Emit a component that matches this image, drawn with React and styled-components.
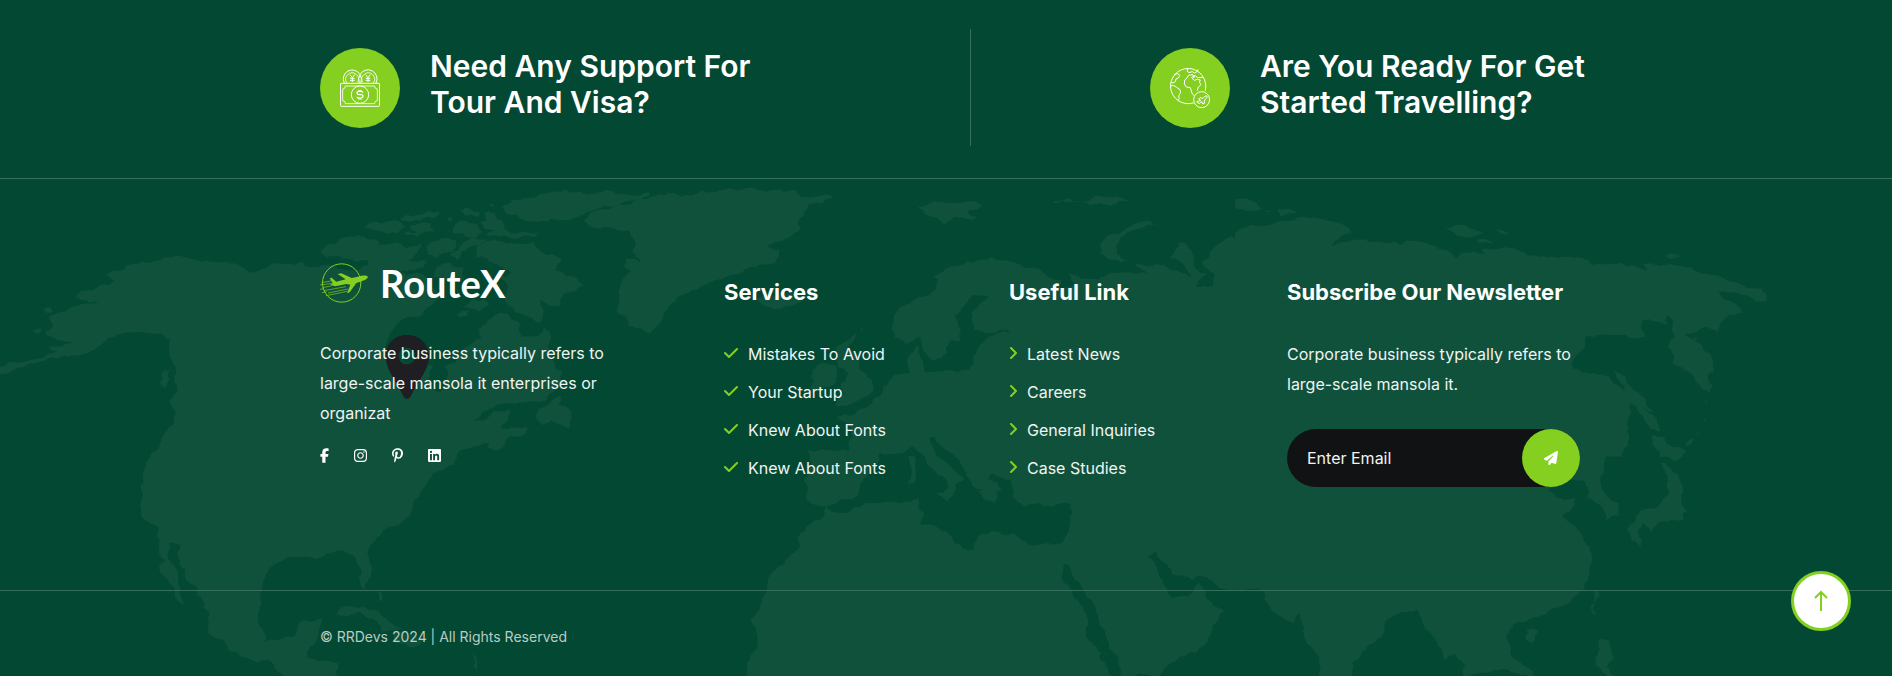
import React from "react";
import styled, { createGlobalStyle } from "styled-components";
import { FaFacebookF, FaInstagram, FaPinterestP, FaLinkedin, FaPaperPlane } from "react-icons/fa6";

const color = {
  ground: "#034833",
  land: "#10513c",
  line: "#35705f",
  lime: "#84cf20",
  white: "#ffffff",
  soft: "#f0f4f2",
  ink: "#111214",
  pin: "#1f1e22",
};

const GlobalStyle = createGlobalStyle`
  *, *::before, *::after { box-sizing: border-box; }
  body {
    margin: 0;
    background: ${color.ground};
    color: ${color.white};
    font-family: Inter, "Liberation Sans", sans-serif;
    font-size: 16px;
    line-height: 30px;
  }
  h2, h3, p, ul { margin: 0; padding: 0; }
  ul { list-style: none; }
  a { color: inherit; text-decoration: none; }
`;

/* ---------- world map backdrop ---------- */

// Breaks each straight edge into small irregular steps so outlines read as coastline.
function coast(points, seed = 7) {
  let s = seed;
  const rand = () => {
    s = (s * 16807) % 2147483647;
    return s / 2147483647 - 0.5;
  };
  let pts = points.trim().split(/\s+/).map((p) => p.split(",").map(Number));
  for (let pass = 0; pass < 4; pass += 1) {
    const next = [];
    pts.forEach((a, i) => {
      const b = pts[(i + 1) % pts.length];
      const dx = b[0] - a[0];
      const dy = b[1] - a[1];
      const len = Math.hypot(dx, dy);
      next.push(a);
      if (len > 7 && len < 240) {
        const k = rand() * 0.32;
        next.push([a[0] + dx / 2 - dy * k, a[1] + dy / 2 + dx * k]);
      }
    });
    pts = next;
  }
  return pts.map((p) => p.map((n) => Math.round(n * 10) / 10).join(",")).join(" ");
}

const america = [
  "-8,598 60,575 110,560 140,545 120,530 180,515 140,510 110,492 130,468 118,442 160,425 215,400 250,395 185,382 200,362 265,345 280,330 260,315 300,300 350,275 400,265 440,258 480,270 530,275 590,290 610,305 650,295 720,285 740,275 750,290 790,285 830,297 860,300 900,285 930,300 980,305 1020,330 1060,350 1080,380 1060,405 1000,440 965,475 950,510 950,560 1000,582 1060,585 1055,640 1075,668 1095,620 1090,590 1140,530 1180,505 1172,478 1195,450 1240,430 1270,455 1280,500 1315,500 1335,470 1345,540 1360,590 1380,605 1370,650 1340,690 1250,700 1200,715 1150,762 1215,722 1250,718 1240,755 1225,775 1290,770 1288,790 1250,800 1210,842 1192,832 1215,805 1130,840 1110,885 1060,910 1035,960 1012,995 1005,1035 940,1080 905,1130 908,1220 895,1262 880,1230 868,1160 820,1145 780,1165 710,1160 675,1180 655,1210 640,1290 630,1340 650,1415 720,1400 745,1350 790,1345 780,1400 755,1465 780,1475 830,1480 830,1525 700,1525 660,1470 630,1478 560,1440 510,1385 513,1330 480,1250 440,1180 440,1125 415,1118 420,1180 442,1260 458,1312 430,1285 415,1240 390,1195 405,1170 390,1120 388,1075 355,1050 345,960 350,910 370,850 410,780 430,730 415,690 435,650 430,590 415,560 418,510 395,490 345,485 300,490 255,515 230,540 180,555 100,575 -8,610",
  "1310,745 1345,700 1375,672 1370,705 1400,725 1395,775 1350,750 1330,765",
  "395,610 415,600 405,655 392,640",
  "78,485 100,475 98,490", "105,418 125,412 130,425 112,428",
  "825,1335 850,1308 890,1310 950,1350 990,1375 935,1385 925,1355 880,1325",
  "965,1395 1010,1390 1040,1410 1010,1432 970,1420",
  "925,1262 938,1275 936,1295 928,1282", "1158,1450 1168,1478 1168,1512 1160,1490",
  "1230,110 1290,85 1420,65 1490,60 1590,66 1590,78 1540,92 1480,108 1450,122 1420,142 1290,152 1240,130",
];

const arctic = [
  "210,215 260,190 272,173 310,172 340,170 380,180 392,195 450,190 470,205 515,190 500,220 475,245 530,240 520,262 470,275 400,285 360,270 350,240 300,238 270,228 230,235",
  "345,142 400,128 435,120 470,140 410,160 375,150", "450,120 500,105 570,97 555,112 510,122",
  "450,165 500,158 480,138 540,130 555,155 500,170", "630,92 660,85 690,100 680,112 645,105",
  "700,100 735,98 738,118 708,120", "615,135 680,130 695,160 660,172 610,160",
  "690,125 760,128 765,142 700,142", "720,155 790,160 870,155 860,168 800,175 710,168",
  "530,200 620,180 610,215 560,235 535,225", "640,185 710,180 660,200 620,240 600,225",
  "560,262 600,248 640,262 640,300 590,300 550,290", "470,285 530,290 540,330 500,345 460,320",
  "680,200 740,182 800,190 850,185 890,225 935,240 915,270 950,290 1000,315 940,342 930,380 900,378 870,360 880,390 868,428 840,410 800,400 760,350 775,320 750,290 785,280 740,250 675,235",
  "640,380 700,358 720,372 690,395 660,385", "620,405 655,390 650,408 630,412",
  "590,120 602,110 605,125", "715,75 728,72 732,82",
];

const southEast = [
  "-40,150 0,120 60,105 140,75 200,80 250,60 380,55 480,62 490,80 575,82 510,105 500,130 485,160 490,180 440,215 410,225 440,240 430,280 385,275 418,285 320,315 260,345 190,380 155,430 125,490 95,475 70,470 45,360 75,305 58,290 65,265 100,280 80,240 72,180 0,175 -30,165",
  "385,385 420,380 470,370 500,380 475,405 430,418 400,405",
  "780,110 860,100 940,105 900,125 925,145 870,140 845,165 800,135",
  "1105,100 1190,95 1230,80 1295,92 1250,108 1200,106",
  "1225,250 1240,200 1290,175 1350,155 1370,168 1290,190 1265,225 1270,255 1300,272 1250,268",
  "575,545 600,515 625,490 610,525 630,555 635,575 660,625 670,660 640,685 575,708 600,670 590,640 610,610 582,590",
  "520,600 550,580 578,585 565,650 515,670 525,635", "640,480 645,468 642,490",
  "755,860 770,860 772,940 755,945", "815,970 850,975 852,998",
  "920,962 975,962 965,1000 945,990",
  "720,440 760,400 830,330 810,320 850,295 900,275 960,262 1010,275 1080,300 1130,330 1128,360 1165,345 1150,310 1180,325 1220,330 1260,308 1340,312 1310,280 1420,305 1450,320 1395,265 1420,215 1450,245 1455,290 1485,310 1460,350 1500,350 1505,310 1475,280 1500,240 1580,190 1580,1262 1530,1258 1470,1215 1450,1230 1405,1215 1385,1180 1362,1145 1340,1160 1370,1220 1385,1250 1400,1285 1440,1280 1465,1240 1490,1290 1528,1320 1500,1370 1490,1410 1420,1460 1370,1525 1280,1525 1270,1460 1220,1340 1180,1250 1140,1180 1135,1200 1110,1155 1160,1280 1190,1330 1190,1400 1225,1470 1258,1525 360,1525 380,1440 368,1350 400,1280 430,1200 485,1140 490,1090 540,1050 552,1012 560,1018 600,1030 650,1000 700,995 780,985 795,1030 780,1060 850,1085 870,1120 915,1140 930,1095 960,1082 1050,1125 1130,1120 1140,1100 1150,1000 1110,1010 1070,1000 1040,1010 1010,980 1005,930 960,910 950,925 985,960 960,970 930,958 900,920 870,860 820,800 808,805 820,840 860,890 892,930 870,945 850,990 835,975 852,955 845,925 800,880 765,828 740,850 685,850 680,880 630,980 560,1008 545,1010 505,988 500,930 515,860 505,840 550,840 610,842 620,800 605,760 580,740 620,735 660,705 710,630 760,610 755,560 780,525 792,575 800,608 850,600 905,600 915,560 935,520 1010,485 950,490 915,480 910,430 950,378 910,378 868,435 885,480 885,510 860,510 850,550 820,572 800,555 780,500 750,522 722,505 715,470",
];

const farEast = [
  "-12,190 70,165 140,143 240,160 268,190 220,228 280,208 330,215 390,225 400,212 460,225 520,265 530,250 590,252 580,235 650,235 740,262 810,262 850,285 940,290 935,280 980,300 970,282 1020,285 1100,305 1180,335 1255,355 1265,395 1210,375 1150,365 1165,390 1210,430 1175,435 1150,485 1120,470 1070,490 1105,520 1130,550 1140,600 1125,620 1132,670 1110,655 1040,575 1028,530 1045,500 1040,460 1025,430 1030,470 1000,455 970,450 965,475 975,500 900,495 830,500 815,550 800,595 850,610 890,620 910,650 940,735 930,830 920,860 880,860 875,900 865,930 910,1000 912,1035 875,1055 870,1010 835,980 830,935 800,928 770,935 740,960 760,985 805,985 775,1040 820,1090 845,1150 840,1210 815,1270 770,1310 700,1345 660,1360 640,1400 650,1430 700,1500 705,1525 540,1525 520,1450 490,1470 460,1390 425,1320 360,1345 340,1400 300,1440 270,1480 270,1525 190,1525 160,1420 145,1330 130,1360 100,1340 60,1290 55,1262 -12,1260",
  "895,600 940,650 1000,730 970,715 1010,785 985,775 955,710 910,630",
  "990,795 1040,830 1072,840 1050,875 1010,860",
  "1010,875 1035,895 1060,940 1062,990 1075,1020 1065,1050 1010,1055 990,1090 970,1060 965,1130 930,1080 960,1025 1005,1010 1030,975 1030,930",
  "850,1260 865,1270 855,1335 842,1310", "690,1380 718,1380 705,1418 685,1405",
  "862,1410 890,1415 895,1450 880,1490 910,1525 870,1505 855,1460",
  "495,175 545,170 585,190 520,195", "595,183 650,188 640,194", "570,210 600,212 610,222 575,220",
  "1022,260 1040,250 1062,262 1035,268", "-12,88 40,98 78,128 20,122 -12,115", "90,118 140,130 95,140",
  "1120,690 1124,700 1120,715", "1116,740 1120,750 1116,755", "1100,790 1104,780 1102,795", "1070,830 1090,805 1082,825",
  "1090,500 1098,505 1094,515",
];

const MapSvg = styled.svg`
  position: absolute;
  inset: 0;
  width: 100%;
  height: 100%;
  z-index: -1;
`;

function Land({ shapes, transform }) {
  return (
    <g transform={transform} fill={color.land}>
      {shapes.map((shape, i) => (
        <polygon key={shape} points={coast(shape, 11 + i * 37)} />
      ))}
    </g>
  );
}

function WorldMap() {
  return (
    <MapSvg viewBox="0 0 1892 676" preserveAspectRatio="xMidYMin slice" aria-hidden="true">
      <Land shapes={america} transform="translate(0 170) scale(0.40816 0.33333)" />
      <Land shapes={arctic} transform="translate(250 180) scale(0.33333)" />
      <Land shapes={southEast} transform="translate(600 170) scale(0.40816 0.33333)" />
      <Land shapes={farEast} transform="translate(1240 170) scale(0.41582 0.33333)" />
      <path
        transform="translate(250 180) scale(0.33333)"
        fill={color.pin}
        fillRule="evenodd"
        d="M471 465C434 465 407 492 407 527C407 572 440 604 461 650Q471 664 481 650C503 604 537 572 537 527C537 492 508 465 471 465ZM471 503A25 25 0 1 1 471 553A25 25 0 1 1 471 503Z"
      />
    </MapSvg>
  );
}

/* ---------- icons ---------- */

function MoneyIcon() {
  return (
    <svg width="40" height="40" viewBox="120 145 120 120" fill="none" stroke="#fff" strokeWidth="3" strokeLinejoin="round" aria-hidden="true">
      <path d="M133 190A26 26 0 1 1 180 165A26 26 0 1 1 228 190" />
      <path d="M180 165Q188 178 182 190M180 165Q173 178 178 190" />
      <path d="M141 190A19 19 0 1 1 173 188M188 188A19 19 0 1 1 220 190" strokeWidth="2.5" />
      <path d="M150 165L157 174L164 165M157 174V187M150 176H164M150 182H164M197 165L204 174L211 165M204 174V187M197 176H211M197 182H211" strokeWidth="3" />
      <rect x="121.500" y="191" width="117" height="69" rx="2" />
      <path d="M136 199H224Q224 208 232 208V243Q224 243 224 252H136Q136 243 128 243V208Q136 208 136 199Z" strokeWidth="2.500" />
      <circle cx="180" cy="225" r="26" fill={color.lime} />
      <path d="M189 219Q188 215 182 215H178Q171 215 171 220T178 225H182Q189 225 189 230T182 235H178Q171 235 171 231M177 210V215M183 210V215M177 235V240M183 235V240" strokeWidth="3.500" />
    </svg>
  );
}

function GlobeIcon() {
  return (
    <svg width="40" height="40" viewBox="123 144 120 120" fill="none" stroke="#fff" strokeWidth="3" strokeLinejoin="round" strokeLinecap="round" aria-hidden="true">
      <path d="M193 249A53 53 0 1 1 229 211" />
      <path d="M138 163L148 161L152 167L148 174L141 177L139 185L132 189L127 187" />
      <path d="M125 197Q136 194 143 202L153 209Q157 217 152 223L149 228L151 236L147 241" />
      <path d="M177 145L174 153L180 158L190 155L196 159L204 155L207 149" />
      <path d="M190 164L178 166L174 174L167 180L166 192L172 201L184 203L187 213L190 222L196 227M190 164L197 170L190 176L196 181L205 178L214 180L211 186L216 194L208 201L205 211" />
      <path d="M188 172L198 167L206 173L221 172" />
      <circle cx="218" cy="239" r="24" fill={color.lime} />
      <path d="M204 245L215 241L209 237L213 233L222 235L229 228Q236 226 234 232L227 240L226 250L221 252L219 245L211 250Z" />
    </svg>
  );
}

function PlaneMark() {
  return (
    <svg width="48" height="40" viewBox="60 68 144 120" fill="none" stroke={color.lime} aria-hidden="true">
      <circle cx="125" cy="128" r="57.500" strokeWidth="3" />
      <path
        fill={color.lime}
        stroke="none"
        d="M204 110C200 104 186 105 174 109L155 113L124 99L113 101L137 117L109 124L95 112L89 114L98 129L91 134L106 138L139 131L151 133L141 159L149 156L169 128C187 123 201 118 204 110Z"
      />
      <path strokeWidth="2" d="M64 127L93 122M60 134L96 129M68 142L95 136M60 147L72 145M72 151L138 139M66 157L80 155M84 158L144 146M78 166L142 153" />
    </svg>
  );
}

const CheckIcon = () => (
  <svg width="14" height="12" viewBox="0 0 14 12" fill="none" stroke={color.lime} strokeWidth="2" strokeLinecap="round" strokeLinejoin="round" aria-hidden="true">
    <path d="M1 5L5 9L13 1" />
  </svg>
);

const ChevronIcon = () => (
  <svg width="8" height="14" viewBox="0 0 8 14" fill="none" stroke={color.lime} strokeWidth="2" strokeLinecap="round" strokeLinejoin="round" aria-hidden="true">
    <path d="M2 1L7 6L2 11" />
  </svg>
);

/* ---------- layout ---------- */

const Page = styled.footer`
  position: relative;
  isolation: isolate;
`;

const Container = styled.div`
  width: 100%;
  max-width: 1268px;
  margin: 0 auto;
  padding-left: 8px;
`;

const CallBand = styled.section`
  padding: 29px 0 32px;
  border-bottom: 1px solid ${color.line};
`;

const CallRow = styled(Container)`
  display: grid;
  grid-template-columns: 651fr 609fr;
`;

const CallItem = styled.div`
  display: flex;
  align-items: flex-start;
  justify-content: ${(p) => (p.$end ? "flex-end" : "flex-start")};
  gap: 30px;
  padding: 19px 0 18px;
  border-right: ${(p) => (p.$end ? "0" : `1px solid ${color.line}`)};
`;

const RoundIcon = styled.span`
  display: flex;
  align-items: center;
  justify-content: center;
  flex: none;
  width: 80px;
  height: 80px;
  border-radius: 50%;
  background: ${color.lime};
`;

const CallTitle = styled.h2`
  flex: 0 0 320px;
  min-width: 0;
  font-size: 30px;
  line-height: 36px;
  font-weight: 600;
  white-space: nowrap;
`;

const Columns = styled(Container)`
  display: grid;
  grid-template-columns: minmax(0, 404fr) minmax(0, 285fr) minmax(0, 278fr) minmax(0, 293fr);
  padding-top: 84px;
  padding-bottom: 103px;
`;

const Column = styled.div`
  padding-top: ${(p) => (p.$brand ? "0" : "14px")};
`;

const Brand = styled.a`
  display: flex;
  align-items: center;
  gap: 12px;
  height: 40px;
  margin-bottom: 35px;
  font-family: Lato, sans-serif;
  font-size: 38px;
  font-weight: 700;
  line-height: 40px;
`;

const Note = styled.p`
  max-width: 300px;
  color: ${color.soft};
`;

const Socials = styled.ul`
  display: flex;
  gap: 25px;
  margin-top: 20px;
`;

const SocialLink = styled.a`
  display: block;
  width: ${(p) => p.$width};
  height: 15px;

  svg {
    display: block;
    width: 100%;
    height: 15px;
  }
`;

const ColumnTitle = styled.h3`
  margin-bottom: 32px;
  font-size: 22px;
  font-weight: 700;
  white-space: nowrap;
`;

const LinkList = styled.ul`
  display: grid;
  gap: 8px;
`;

const ListLink = styled.a`
  display: flex;
  align-items: center;
  gap: 10px;
  color: ${color.soft};

  svg { flex: none; }
`;

const Form = styled.form`
  display: flex;
  height: 58px;
  margin-top: 30px;
  border-radius: 29px;
  background: ${color.ink};
`;

const HiddenLabel = styled.label`
  position: absolute;
  width: 1px;
  height: 1px;
  overflow: hidden;
  clip-path: inset(50%);
`;

const EmailInput = styled.input`
  flex: 1;
  width: 100%;
  min-width: 0;
  padding: 0 20px;
  border: 0;
  outline: 0;
  background: transparent;
  color: ${color.white};
  font: inherit;

  &::placeholder {
    color: ${color.soft};
    opacity: 1;
  }
`;

const SendButton = styled.button`
  display: flex;
  align-items: center;
  justify-content: center;
  flex: none;
  width: 58px;
  height: 58px;
  padding: 0;
  border: 0;
  border-radius: 50%;
  background: ${color.lime};
  color: ${color.white};
`;

const BottomBar = styled.div`
  padding: 36px 0 29px;
  border-top: 1px solid ${color.line};
`;

const Copyright = styled.p`
  color: #b9ccc5;
  font-size: 14px;
  line-height: 20px;
`;

const TopButton = styled.button`
  position: fixed;
  right: 41px;
  bottom: 45px;
  display: flex;
  align-items: center;
  justify-content: center;
  width: 60px;
  height: 60px;
  padding: 0;
  border: 3px solid ${color.lime};
  border-radius: 50%;
  background: ${color.white};
`;

const services = ["Mistakes To Avoid", "Your Startup", "Knew About Fonts", "Knew About Fonts"];
const useful = ["Latest News", "Careers", "General Inquiries", "Case Studies"];
const socials = [
  ["Facebook", FaFacebookF, "9px"],
  ["Instagram", FaInstagram, "13px"],
  ["Pinterest", FaPinterestP, "11px"],
  ["LinkedIn", FaLinkedin, "13px"],
];

function Links({ items, icon }) {
  return (
    <LinkList>
      {items.map((label, i) => (
        <li key={i}>
          <ListLink href="#">
            {icon}
            {label}
          </ListLink>
        </li>
      ))}
    </LinkList>
  );
}

export default function App() {
  return (
    <>
      <GlobalStyle />
      <Page>
        <WorldMap />
        <CallBand>
          <CallRow>
            <CallItem>
              <RoundIcon><MoneyIcon /></RoundIcon>
              <CallTitle>Need Any Support For<br />Tour And Visa?</CallTitle>
            </CallItem>
            <CallItem $end>
              <RoundIcon><GlobeIcon /></RoundIcon>
              <CallTitle>Are You Ready For Get<br />Started Travelling?</CallTitle>
            </CallItem>
          </CallRow>
        </CallBand>

        <Columns>
          <Column $brand>
            <Brand href="#"><PlaneMark />RouteX</Brand>
            <Note>Corporate business typically refers to large-scale mansola it enterprises or organizat</Note>
            <Socials>
              {socials.map(([name, Icon, width]) => (
                <li key={name}>
                  <SocialLink href="#" aria-label={name} $width={width}><Icon /></SocialLink>
                </li>
              ))}
            </Socials>
          </Column>
          <Column>
            <ColumnTitle>Services</ColumnTitle>
            <Links items={services} icon={<CheckIcon />} />
          </Column>
          <Column>
            <ColumnTitle>Useful Link</ColumnTitle>
            <Links items={useful} icon={<ChevronIcon />} />
          </Column>
          <Column>
            <ColumnTitle>Subscribe Our Newsletter</ColumnTitle>
            <Note>Corporate business typically refers to large-scale mansola it.</Note>
            <Form onSubmit={(e) => e.preventDefault()}>
              <HiddenLabel htmlFor="email">Email address</HiddenLabel>
              <EmailInput id="email" type="email" placeholder="Enter Email" />
              <SendButton type="submit" aria-label="Subscribe"><FaPaperPlane size={14} /></SendButton>
            </Form>
          </Column>
        </Columns>

        <BottomBar>
          <Container>
            <Copyright>© RRDevs 2024 | All Rights Reserved</Copyright>
          </Container>
        </BottomBar>
      </Page>
      <TopButton type="button" aria-label="Back to top">
        <svg width="14" height="22" viewBox="0 0 14 22" fill="none" stroke={color.lime} strokeWidth="2" aria-hidden="true">
          <path d="M7 21V2M1 8L7 2L13 8" />
        </svg>
      </TopButton>
    </>
  );
}
